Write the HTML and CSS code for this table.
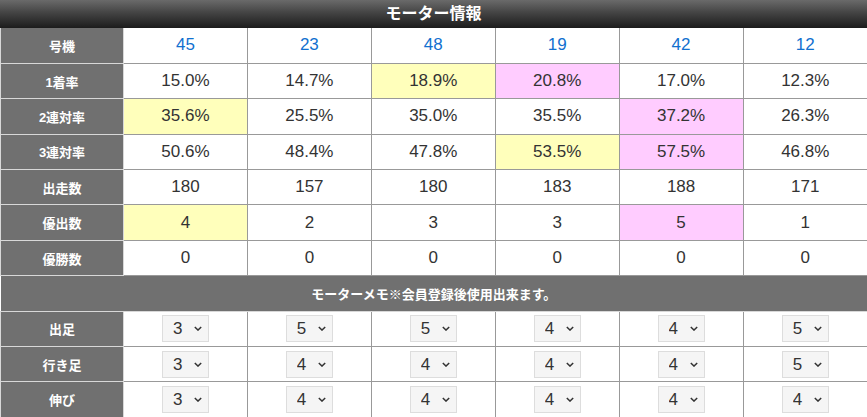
FILE: index.html
```html
<!DOCTYPE html>
<html lang="ja">
<head>
<meta charset="utf-8">
<title>モーター情報</title>
<link rel="stylesheet" href="styles.css">
</head>
<body>
<div class="motor">
  <h2 class="motor-title">モーター情報</h2>
  <table class="motor-table">
    <colgroup>
      <col class="col-label"><col><col><col><col><col><col>
    </colgroup>
    <tbody>
      <tr>
        <th>号機</th>
        <td class="no">45</td><td class="no">23</td><td class="no">48</td><td class="no">19</td><td class="no">42</td><td class="no">12</td>
      </tr>
      <tr>
        <th>1着率</th>
        <td>15.0%</td><td>14.7%</td><td class="hi2">18.9%</td><td class="hi1">20.8%</td><td>17.0%</td><td>12.3%</td>
      </tr>
      <tr>
        <th>2連対率</th>
        <td class="hi2">35.6%</td><td>25.5%</td><td>35.0%</td><td>35.5%</td><td class="hi1">37.2%</td><td>26.3%</td>
      </tr>
      <tr>
        <th>3連対率</th>
        <td>50.6%</td><td>48.4%</td><td>47.8%</td><td class="hi2">53.5%</td><td class="hi1">57.5%</td><td>46.8%</td>
      </tr>
      <tr>
        <th>出走数</th>
        <td>180</td><td>157</td><td>180</td><td>183</td><td>188</td><td>171</td>
      </tr>
      <tr>
        <th>優出数</th>
        <td class="hi2">4</td><td>2</td><td>3</td><td>3</td><td class="hi1">5</td><td>1</td>
      </tr>
      <tr>
        <th>優勝数</th>
        <td>0</td><td>0</td><td>0</td><td>0</td><td>0</td><td>0</td>
      </tr>
      <tr>
        <th colspan="7" class="memo">モーターメモ※会員登録後使用出来ます。</th>
      </tr>
      <tr>
        <th>出足</th>
        <td><span class="sel"><select><option>3</option></select><svg class="chev" viewBox="0 0 10 6"><path d="M1 1l4 4 4-4"/></svg></span></td>
        <td><span class="sel"><select><option>5</option></select><svg class="chev" viewBox="0 0 10 6"><path d="M1 1l4 4 4-4"/></svg></span></td>
        <td><span class="sel"><select><option>5</option></select><svg class="chev" viewBox="0 0 10 6"><path d="M1 1l4 4 4-4"/></svg></span></td>
        <td><span class="sel"><select><option>4</option></select><svg class="chev" viewBox="0 0 10 6"><path d="M1 1l4 4 4-4"/></svg></span></td>
        <td><span class="sel"><select><option>4</option></select><svg class="chev" viewBox="0 0 10 6"><path d="M1 1l4 4 4-4"/></svg></span></td>
        <td><span class="sel"><select><option>5</option></select><svg class="chev" viewBox="0 0 10 6"><path d="M1 1l4 4 4-4"/></svg></span></td>
      </tr>
      <tr>
        <th>行き足</th>
        <td><span class="sel"><select><option>3</option></select><svg class="chev" viewBox="0 0 10 6"><path d="M1 1l4 4 4-4"/></svg></span></td>
        <td><span class="sel"><select><option>4</option></select><svg class="chev" viewBox="0 0 10 6"><path d="M1 1l4 4 4-4"/></svg></span></td>
        <td><span class="sel"><select><option>4</option></select><svg class="chev" viewBox="0 0 10 6"><path d="M1 1l4 4 4-4"/></svg></span></td>
        <td><span class="sel"><select><option>4</option></select><svg class="chev" viewBox="0 0 10 6"><path d="M1 1l4 4 4-4"/></svg></span></td>
        <td><span class="sel"><select><option>4</option></select><svg class="chev" viewBox="0 0 10 6"><path d="M1 1l4 4 4-4"/></svg></span></td>
        <td><span class="sel"><select><option>5</option></select><svg class="chev" viewBox="0 0 10 6"><path d="M1 1l4 4 4-4"/></svg></span></td>
      </tr>
      <tr>
        <th>伸び</th>
        <td><span class="sel"><select><option>3</option></select><svg class="chev" viewBox="0 0 10 6"><path d="M1 1l4 4 4-4"/></svg></span></td>
        <td><span class="sel"><select><option>4</option></select><svg class="chev" viewBox="0 0 10 6"><path d="M1 1l4 4 4-4"/></svg></span></td>
        <td><span class="sel"><select><option>4</option></select><svg class="chev" viewBox="0 0 10 6"><path d="M1 1l4 4 4-4"/></svg></span></td>
        <td><span class="sel"><select><option>4</option></select><svg class="chev" viewBox="0 0 10 6"><path d="M1 1l4 4 4-4"/></svg></span></td>
        <td><span class="sel"><select><option>4</option></select><svg class="chev" viewBox="0 0 10 6"><path d="M1 1l4 4 4-4"/></svg></span></td>
        <td><span class="sel"><select><option>4</option></select><svg class="chev" viewBox="0 0 10 6"><path d="M1 1l4 4 4-4"/></svg></span></td>
      </tr>
    </tbody>
  </table>
</div>
</body>
</html>
```
FILE: styles.css
```css
html, body {
  margin: 0;
  padding: 0;
  background: #fff;
}
body {
  font-family: "Liberation Sans", Arial, "Noto Sans CJK JP", sans-serif;
  color: #333;
}
.motor {
  width: 867px;
}
.motor-title {
  margin: 0;
  height: 28px;
  line-height: 28px;
  text-align: center;
  font-family: "Liberation Sans", "Noto Sans CJK JP", sans-serif;
  font-size: 16px;
  font-weight: bold;
  color: #fff;
  background: linear-gradient(to bottom, #6a6a6a 0%, #444 45%, #1c1c1c 100%);
}
.motor-table {
  width: 867px;
  table-layout: fixed;
  border-collapse: collapse;
}
.col-label {
  width: 123px;
}
.motor-table tr {
  height: 35.4px;
}
.motor-table th {
  background: #707070;
  color: #fff;
  font-family: "Liberation Sans", "Noto Sans CJK JP", sans-serif;
  font-size: 13px;
  font-weight: bold;
  border: 1px solid #d8d8d8;
  border-top: 0;
  padding: 0;
  text-align: center;
}
.motor-table td {
  border: 1px solid #999;
  border-top: 0;
  padding: 0;
  text-align: center;
  font-size: 17px;
  color: #333;
}
.motor-table tr:last-child td,
.motor-table tr:last-child th {
  border-bottom: 0;
}
.motor-table td:last-child {
  border-right: 0;
}
.motor-table .memo {
  font-size: 13px;
  border-left: 0;
  border-right: 0;
}
.motor-table td.no {
  color: #1170cf;
}
.motor-table td.hi1 {
  background: #ffccff;
}
.motor-table td.hi2 {
  background: #ffffbb;
}
.sel {
  position: relative;
  display: inline-block;
  vertical-align: middle;
}
.sel select {
  appearance: none;
  -webkit-appearance: none;
  width: 47px;
  height: 27px;
  margin: 0;
  padding: 0 0 0 10px;
  border: 1px solid #ddd;
  border-radius: 0;
  background: #f5f5f5;
  color: #333;
  font-family: "Liberation Sans", Arial, sans-serif;
  font-size: 17px;
  text-align: left;
  display: block;
}
.sel .chev {
  position: absolute;
  right: 7px;
  top: 11px;
  width: 8px;
  height: 5px;
  fill: none;
  stroke: #333;
  stroke-width: 1.8;
  pointer-events: none;
}
```
